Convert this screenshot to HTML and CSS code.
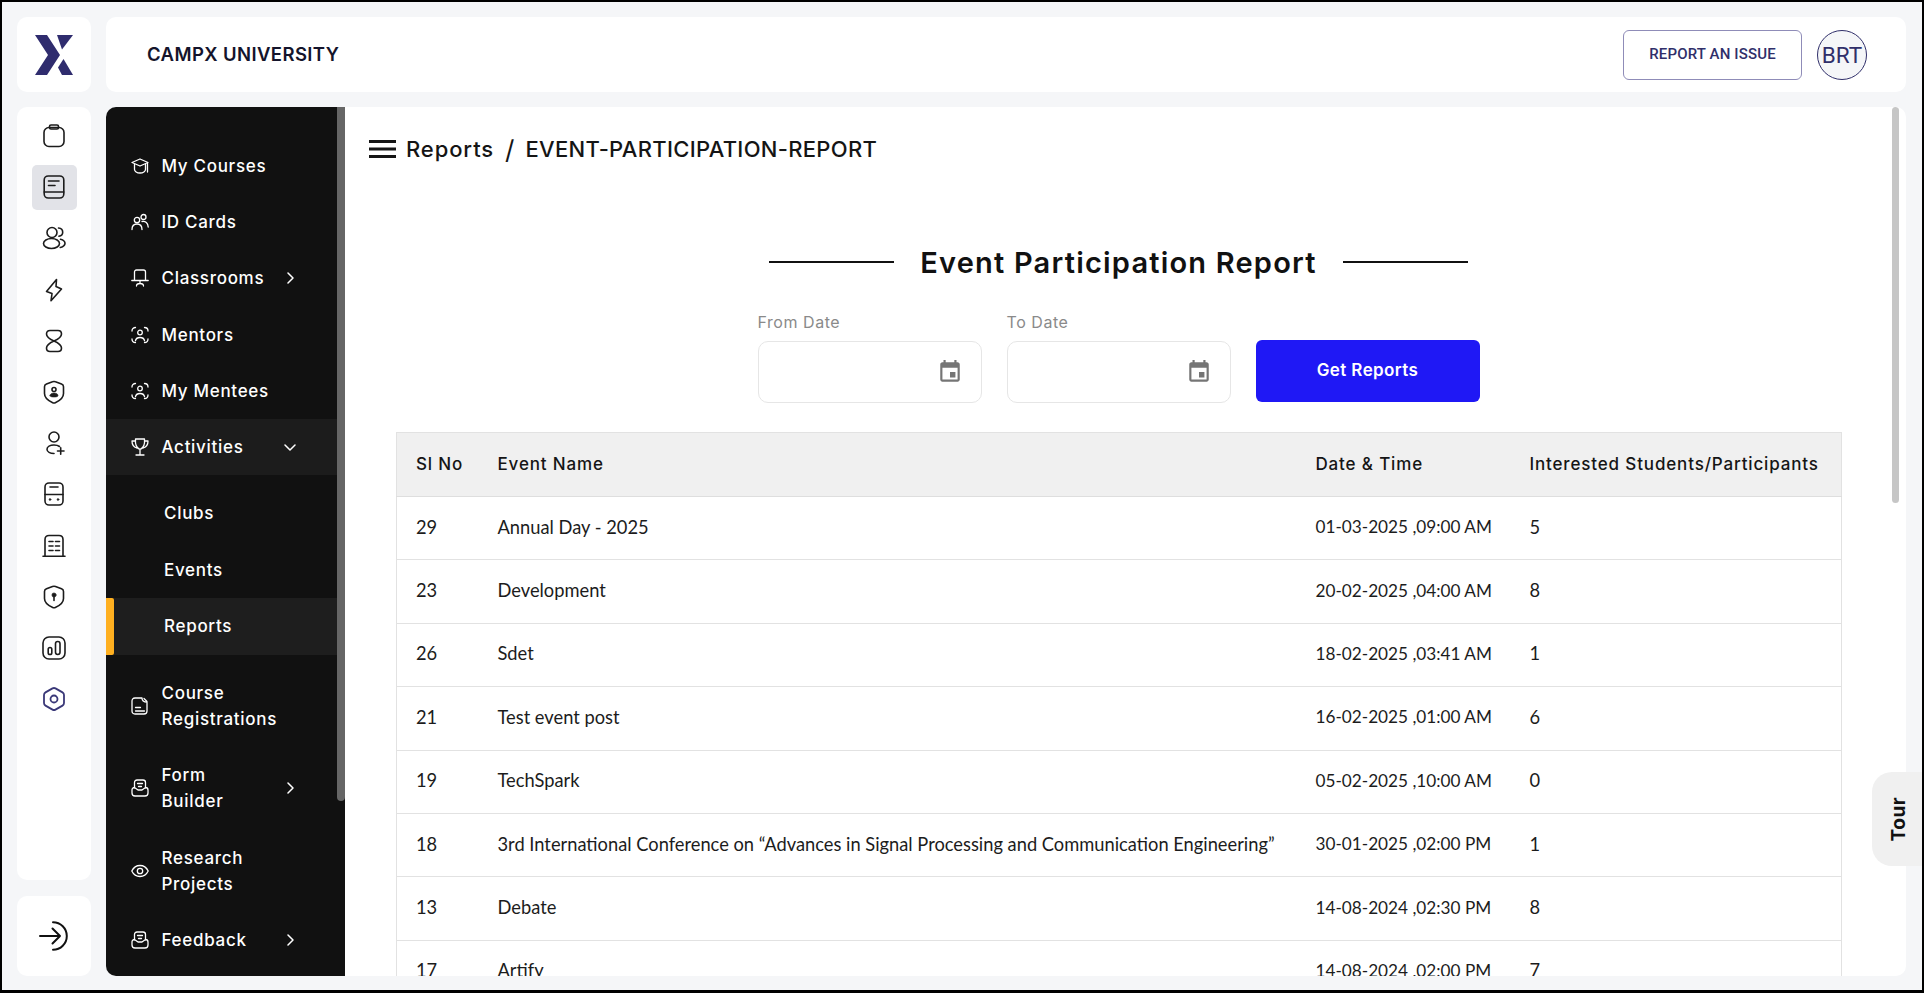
FILE: index.html
```html
<!DOCTYPE html>
<html lang="en">
<head>
<meta charset="utf-8">
<title>Event Participation Report</title>
<link rel="stylesheet" href="styles.css">
</head>
<body>
<div class="frame">
  <div class="card logo-card">
    <svg class="logo" viewBox="0 0 38 40"><polygon points="0,0 12,0 25,20 12,40 0,40 13,20"/><polygon points="22,0 38,0 27,14.500"/><polygon points="28.500,24 38,40 27,40 23,32.500"/></svg>
  </div>
  <header class="card topbar">
    <div class="org">CAMPX UNIVERSITY</div>
    <div class="top-actions">
      <button class="report-btn">REPORT AN ISSUE</button>
      <div class="avatar">BRT</div>
    </div>
  </header>
  <div class="rail-col">
    <nav class="card rail">
      <a class="rail-item"><svg viewBox="0 0 24 24"><rect x="2" y="3.500" width="20" height="19" rx="5"/><rect x="7.500" y="1" width="9" height="4" rx="1.500"/></svg></a>
      <a class="rail-item on"><svg viewBox="0 0 24 24"><rect x="2.200" y="1" width="19.600" height="22" rx="4"/><path d="M2.200 17h19.600M6.500 6h10.500M6.500 10.500h6.500"/></svg></a>
      <a class="rail-item"><svg viewBox="0 0 24 24"><circle cx="10" cy="6.500" r="5"/><ellipse cx="9.500" cy="17.500" rx="8" ry="5"/><path d="M16.500 2c3 .3 4.200 2 4.200 4.200 0 2-1.300 3.600-3.800 4M18.500 13.200c2.800.8 4.500 2.200 4.500 4 0 2-1.800 3.500-4.700 4.300"/></svg></a>
      <a class="rail-item"><svg viewBox="0 0 24 24"><path d="M14.500 1.500 4.500 13.500 10 15.500 9 22.800 19.500 11 14 8.500Z"/></svg></a>
      <a class="rail-item"><svg viewBox="0 0 24 24"><path d="M12 12C7.500 10 4.500 8 4.500 5 4.500 2.500 6 1.500 8 1.500h8c2 0 3.500 1 3.500 3.500 0 3-3 5-7.500 7-4.500 2-7.500 4-7.500 7 0 2.500 1.500 3.500 3.500 3.500h8c2 0 3.500-1 3.500-3.500 0-3-3-5-7.500-7Z"/></svg></a>
      <a class="rail-item"><svg viewBox="0 0 24 24"><path d="M10.500 1.800a4 4 0 0 1 3 0l6 2.200c1.300.5 2 1.500 2 2.800v6.700c0 4-3.200 7-8.200 9.200a3 3 0 0 1-2.600 0C5.700 20.500 2.500 17.500 2.500 13.500V6.800c0-1.300.7-2.300 2-2.800Z"/><circle cx="12" cy="9.500" r="2"/><path class="solid" d="M8 15.700c0-1.800 1.800-2.700 4-2.700s4 .9 4 2.700c0 .9-1.800 1.300-4 1.300s-4-.4-4-1.300Z"/></svg></a>
      <a class="rail-item"><svg viewBox="0 0 24 24"><circle cx="12" cy="6" r="5"/><path d="M17.500 15.500c-1.300-1-3.200-1.500-5.500-1.500-3.800 0-7 1.700-7 4.300s3.200 4.200 7 4.200M15.500 20h6.500M18.700 16.800v6.400"/></svg></a>
      <a class="rail-item"><svg viewBox="0 0 24 24"><rect x="3" y="1" width="18" height="22" rx="4"/><path d="M3 12.500h18M8 5h8"/><circle class="solid" cx="8" cy="17.500" r=".9"/><circle class="solid" cx="16" cy="17.500" r=".9"/></svg></a>
      <a class="rail-item"><svg viewBox="0 0 24 24"><path d="M3 22.300V5.500c0-2.500 1.500-4 4-4h10c2.500 0 4 1.500 4 4v16.800M1 22.300h22M7 7.500h4M13.500 7.500h4M7 12h4M13.500 12h4M7 16.500h4M13.500 16.500h4"/></svg></a>
      <a class="rail-item"><svg viewBox="0 0 24 24"><path d="M10.500 1.500a4 4 0 0 1 3 0l6 2.300c1.300.5 2 1.500 2 2.700v7c0 3.800-3.200 6.800-8.200 9a3 3 0 0 1-2.600 0C5.700 20.300 2.500 17.300 2.500 13.500v-7c0-1.200.7-2.200 2-2.700Z"/><circle class="solid" cx="12" cy="10" r="2.100"/><path d="M12 11v4.500"/></svg></a>
      <a class="rail-item"><svg viewBox="0 0 24 24"><rect x="1" y="1" width="22" height="22" rx="6"/><rect x="6.200" y="11.500" width="3.600" height="7" rx="1.800"/><rect x="13.500" y="5.500" width="4.500" height="13" rx="2.250"/></svg></a>
      <a class="rail-item brand"><svg viewBox="0 0 24 24"><path d="M10.500 1.400a3 3 0 0 1 3 0l7 4a3 3 0 0 1 1.500 2.600v8a3 3 0 0 1-1.500 2.600l-7 4a3 3 0 0 1-3 0l-7-4A3 3 0 0 1 2 16V8a3 3 0 0 1 1.500-2.600Z"/><circle cx="12" cy="12" r="3.500"/></svg></a>
    </nav>
    <div class="card exit">
      <svg viewBox="0 0 30 30"><path d="M1 15h20M13.500 7.500 21 15l-7.500 7.500M14 1.200a13.800 13.800 0 0 1 0 27.600"/></svg>
    </div>
  </div>
  <div class="body-row">
    <aside class="sidebar">
      <ul class="menu">
        <li class="item"><svg viewBox="0 0 18 18"><path d="M9 2 1 5.500 9 9l8-3.500Z"/><path d="M3.500 7.500v5c0 1.800 2.400 3.500 5.500 3.500s5.500-1.700 5.500-3.500v-5M16.500 6v9"/></svg><span>My Courses</span></li>
        <li class="item"><svg viewBox="0 0 18 18"><circle cx="6" cy="7" r="2.700"/><circle cx="12.500" cy="4" r="2.500"/><path d="M1 16.500c0-3.500 2.200-5.500 5-5.500s5 2 5 5.500M11 8.500c3.500-.5 6 1.500 6.200 5.500"/></svg><span>ID Cards</span></li>
        <li class="item"><svg viewBox="0 0 18 18"><path d="M3.500 11.500V3c0-1 .7-2 2-2h7c1.300 0 2 1 2 2v8.500M.8 11.500h16.400M9 11.500v3M5.500 17c0-1.500 1.500-2.500 3.500-2.500s3.500 1 3.500 2.500"/></svg><span>Classrooms</span><svg class="chev" viewBox="0 0 7 12"><path d="M1 1l5 5-5 5"/></svg></li>
        <li class="item"><svg viewBox="0 0 18 18"><path d="M1 5c0-2 1.500-3.500 3.500-3.500M13.500 1.500C15.500 1.500 17 3 17 5M1 13c0 2 1.500 3.500 3.500 3.500M17 13c0 2-1.500 3.500-3.500 3.500M4.500 14.500c.5-2 2.400-3 4.500-3s4 1 4.500 3"/><circle cx="9" cy="6.500" r="2.300"/></svg><span>Mentors</span></li>
        <li class="item"><svg viewBox="0 0 18 18"><path d="M1 5c0-2 1.500-3.500 3.500-3.500M13.500 1.500C15.500 1.500 17 3 17 5M1 13c0 2 1.500 3.500 3.500 3.500M17 13c0 2-1.500 3.500-3.500 3.500M4.500 14.500c.5-2 2.400-3 4.500-3s4 1 4.500 3"/><circle cx="9" cy="6.500" r="2.300"/></svg><span>My Mentees</span></li>
        <li class="item open"><svg viewBox="0 0 18 18"><path d="M4.500 1h9c.5 5.500-.8 9-4.500 10.500C5.300 10 4 6.500 4.500 1ZM4.500 3H1c0 3.500 1.500 6 4.700 7M13.500 3H17c0 3.500-1.500 6-4.700 7M9 11.500v5.500M5 17h8"/></svg><span>Activities</span><svg class="chev down" viewBox="0 0 12 7"><path d="M1 1l5 5 5-5"/></svg></li>
        <li class="sub first">Clubs</li>
        <li class="sub">Events</li>
        <li class="sub active">Reports</li>
        <li class="item tall first-tall"><svg viewBox="0 0 18 18"><path d="M4 1h7c0 2.500 1.500 4 5 4.200V14c0 1.800-1 3-3 3H4c-2 0-3-1.200-3-3V4c0-1.800 1-3 3-3ZM13 1.500l3 3M4.500 10.500h5M4.500 14h9"/></svg><span>Course<br>Registrations</span></li>
        <li class="item tall"><svg viewBox="0 0 18 18"><path d="M3.500 9V3.500C3.500 2 4.500 1 6 1h6c1.500 0 2.500 1 2.500 2.500V9M3.500 8.500C2 8.500 1 9.500 1 11v3c0 1.800 1.200 3 3 3h10c1.800 0 3-1.200 3-3v-3c0-1.500-1-2.500-2.500-2.500L11 11H7ZM6.500 4.500h5M7.500 7.500h3"/></svg><span>Form<br>Builder</span><svg class="chev" viewBox="0 0 7 12"><path d="M1 1l5 5-5 5"/></svg></li>
        <li class="item tall"><svg viewBox="0 0 18 18"><path d="M.8 9C2.500 5.500 5.500 3.500 9 3.500s6.500 2 8.200 5.500c-1.700 3.500-4.700 5.500-8.200 5.500S2.500 12.500.8 9Z"/><circle cx="9" cy="9" r="2.700"/></svg><span>Research<br>Projects</span></li>
        <li class="item"><svg viewBox="0 0 18 18"><path d="M3.500 9V3.500C3.500 2 4.500 1 6 1h6c1.500 0 2.500 1 2.500 2.500V9M3.500 8.500C2 8.500 1 9.500 1 11v3c0 1.800 1.200 3 3 3h10c1.800 0 3-1.200 3-3v-3c0-1.500-1-2.500-2.500-2.500L11 11H7ZM6.500 4.500h5M7.500 7.500h3"/></svg><span>Feedback</span><svg class="chev" viewBox="0 0 7 12"><path d="M1 1l5 5-5 5"/></svg></li>
      </ul>
      <div class="thumb side-thumb"></div>
    </aside>
    <main class="main">
      <div class="crumbs">
        <svg class="burger" viewBox="0 0 27 18"><path d="M0 1.500h27M0 9h27M0 16.500h27"/></svg>
        <span class="crumb-parent">Reports</span><span class="slash">/</span><span class="crumb-page">EVENT-PARTICIPATION-REPORT</span>
      </div>
      <div class="title-row">
        <i class="rule"></i>
        <h1>Event Participation Report</h1>
        <i class="rule"></i>
      </div>
      <form class="filters">
        <div class="field">
          <label>From Date</label>
          <div class="date-box"><svg viewBox="0 0 24 24"><path d="M17 12h-5v5h5v-5zM16 1v2H8V1H6v2H5c-1.110 0-1.990.9-1.990 2L3 19c0 1.100.89 2 2 2h14c1.100 0 2-.9 2-2V5c0-1.100-.9-2-2-2h-1V1h-2zm3 18H5V8h14v11z"/></svg></div>
        </div>
        <div class="field">
          <label>To Date</label>
          <div class="date-box"><svg viewBox="0 0 24 24"><path d="M17 12h-5v5h5v-5zM16 1v2H8V1H6v2H5c-1.110 0-1.990.9-1.990 2L3 19c0 1.100.89 2 2 2h14c1.100 0 2-.9 2-2V5c0-1.100-.9-2-2-2h-1V1h-2zm3 18H5V8h14v11z"/></svg></div>
        </div>
        <button type="button" class="get-btn">Get Reports</button>
      </form>
      <table class="report">
        <thead>
          <tr><th class="c1">Sl No</th><th class="c2">Event Name</th><th class="c3">Date &amp; Time</th><th class="c4">Interested Students/Participants</th></tr>
        </thead>
        <tbody>
          <tr><td>29</td><td>Annual Day - 2025</td><td class="when">01-03-2025 ,09:00 AM</td><td>5</td></tr>
          <tr><td>23</td><td>Development</td><td class="when">20-02-2025 ,04:00 AM</td><td>8</td></tr>
          <tr><td>26</td><td>Sdet</td><td class="when">18-02-2025 ,03:41 AM</td><td>1</td></tr>
          <tr><td>21</td><td>Test event post</td><td class="when">16-02-2025 ,01:00 AM</td><td>6</td></tr>
          <tr><td>19</td><td>TechSpark</td><td class="when">05-02-2025 ,10:00 AM</td><td>0</td></tr>
          <tr><td>18</td><td>3rd International Conference on “Advances in Signal Processing and Communication Engineering”</td><td class="when">30-01-2025 ,02:00 PM</td><td>1</td></tr>
          <tr><td>13</td><td>Debate</td><td class="when">14-08-2024 ,02:30 PM</td><td>8</td></tr>
          <tr><td>17</td><td>Artify</td><td class="when">14-08-2024 ,02:00 PM</td><td>7</td></tr>
        </tbody>
      </table>
      <div class="thumb main-thumb"></div>
    </main>
  </div>
  <div class="tour"><span>Tour</span></div>
</div>
</body>
</html>
```
FILE: styles.css
```css
* { box-sizing: border-box; }
html, body { margin: 0; height: 100%; overflow: hidden; }
body { font-family: "Inter", "Liberation Sans", sans-serif; color: #121212; background: #000; }
.frame {
  position: relative;
  height: 993px;
  border: solid #000;
  border-width: 2px 2px 3px 2px;
  background: #f5f6f8;
  padding: 15px 16px 14px 15px;
  display: grid;
  grid-template-columns: 74px 1fr;
  grid-template-rows: 75px 869px;
  column-gap: 15px;
  row-gap: 15px;
}
.card { background: #fff; border-radius: 10px; }
.logo-card { display: flex; align-items: center; justify-content: center; }
.logo { width: 38px; height: 40px; fill: #2f2c6e; }
.topbar { display: flex; align-items: center; justify-content: space-between; padding: 0 39px 0 41px; }
.org { font-size: 18.500px; font-weight: 600; color: #14142b; letter-spacing: .4px; transform: translateY(-1px); }
.top-actions { display: flex; align-items: center; gap: 15px; }
.report-btn {
  width: 179px; height: 50px; background: #fff;
  border: 1px solid #8f8cb8; border-radius: 6px;
  font: 500 15px "Roboto", sans-serif; color: #302f6a; letter-spacing: .15px; padding: 0 0 2px;
}
.avatar {
  width: 50px; height: 50px; border-radius: 50%;
  border: 1px solid #302f6a; background: #f5f6f8;
  display: flex; align-items: center; justify-content: center;
  font: 400 22.500px "Roboto", sans-serif; color: #302f6a;
}
.rail-col { display: flex; flex-direction: column; gap: 16px; min-height: 0; }
.rail { flex: 1; display: flex; flex-direction: column; align-items: center; padding-top: 6.500px; gap: 6.200px; }
.rail-item { width: 45px; height: 45px; display: flex; align-items: center; justify-content: center; border-radius: 5px; }
.rail-item.on { background: #e2e3e8; }
.rail-item svg { width: 24px; height: 24px; fill: none; stroke: #1c1c1c; stroke-width: 1.600; stroke-linecap: round; stroke-linejoin: round; }
.rail-item svg .solid { fill: #1c1c1c; stroke-width: .6; }
.rail-item.brand svg { stroke: #3a3878; stroke-width: 1.800; }
.exit { height: 80px; display: flex; align-items: center; justify-content: center; }
.exit svg { width: 30px; height: 30px; fill: none; stroke: #111; stroke-width: 2; stroke-linecap: round; stroke-linejoin: round; }
.body-row { display: flex; min-width: 0; min-height: 0; }
.sidebar {
  position: relative; width: 239px; flex: none; overflow: hidden;
  background: #111; border-radius: 10px 0 0 10px; padding-right: 8px;
}
.menu { list-style: none; margin: 0; padding: 31px 0 0; color: #fff; font-size: 17px; font-weight: 500; letter-spacing: .7px; }
.item { display: flex; align-items: center; height: 56.200px; padding: 0 43px 0 25px; line-height: 26px; }
.item > svg:first-child { width: 18px; height: 18px; flex: none; margin-right: 12.500px; fill: none; stroke: #fff; stroke-width: 1.300; stroke-linecap: round; stroke-linejoin: round; }
.item.tall { height: 82.500px; }
.item.open { background: #1c1c1c; }
.first-tall { margin-top: 10px; }
.chev { width: 7px; height: 12px; margin-left: auto; fill: none; stroke: #fff; stroke-width: 1.500; stroke-linecap: round; stroke-linejoin: round; }
.chev.down { width: 12px; height: 7px; margin-right: -2px; }
.sub { position: relative; height: 56.500px; display: flex; align-items: center; padding-left: 58px; }
.sub.first { margin-top: 10px; }
.sub.active { background: #1e1e1e; }
.sub.active::before { content: ""; position: absolute; left: 0; top: 0; bottom: 0; width: 8px; background: #ffb020; border-radius: 0 2px 2px 0; }
.thumb { position: absolute; top: 0; border-radius: 0 0 4px 4px; }
.side-thumb { right: 0; width: 8px; height: 694px; background: #666; }
.main { position: relative; flex: 1; min-width: 0; overflow: hidden; background: #fff; border-radius: 0 10px 10px 0; padding-right: 14px; }
.main-thumb { right: 7px; width: 7px; height: 396px; background: #c6c6c6; border-radius: 4px; }
.crumbs { display: flex; align-items: center; height: 30px; margin: 27px 0 0 24px; font-size: 22px; font-weight: 500; color: #151515; }
.crumb-parent { letter-spacing: .9px; }
.crumb-page { letter-spacing: .3px; }
.burger { width: 27px; height: 18px; margin-right: 10px; fill: none; stroke: #151515; stroke-width: 2.800; }
.slash { margin: 0 11px; font-size: 26px; font-weight: 400; }
.title-row { display: flex; justify-content: center; align-items: center; gap: 26px; height: 42px; margin-top: 77px; }
.title-row h1 { margin: 0; font-size: 29px; font-weight: 600; color: #111; letter-spacing: 1.200px; }
.rule { width: 125px; height: 2px; background: #111; }
.filters { display: flex; justify-content: center; gap: 25px; margin-top: 27px; align-items: flex-end; }
.field { width: 224px; }
.field label { display: block; height: 31px; line-height: 24px; font-size: 16px; color: #8a8a8a; letter-spacing: .55px; }
.date-box { height: 62px; border: 1px solid #e6e6e6; border-radius: 10px; display: flex; align-items: center; justify-content: flex-end; padding-right: 18px; }
.date-box svg { width: 26px; height: 26px; fill: #757575; }
.get-btn { width: 224px; height: 62px; margin-bottom: 1px; border: 0; border-radius: 6px; background: #1f18f5; color: #fff; font: 600 17px "Inter", sans-serif; letter-spacing: .4px; padding: 0 0 2px; }
.report { width: 1445px; margin: 29px 51px 0; border-collapse: collapse; table-layout: fixed; border: 1px solid #e2e2e2; }
.report th { height: 64px; background: #f0f0f0; border-bottom: 1px solid #dedede; padding: 0 0 2px 19px; text-align: left; font-size: 17px; font-weight: 500; color: #151515; letter-spacing: .85px; }
.report td { height: 63.400px; border-bottom: 1px solid #e2e2e2; padding: 0 0 3px 19px; font-family: "Lato", sans-serif; font-size: 18.300px; color: #1c1c1c; white-space: nowrap; }
.report td.when { font-size: 17.200px; }
.c1 { width: 82px; }
.c2 { width: 818px; }
.c3 { width: 214px; }
.c4 { width: 331px; }
.tour {
  position: absolute; right: 0; top: 770px; width: 50px; height: 94px;
  background: #f0f0f0; border-radius: 20px 0 0 20px;
  display: flex; align-items: center; justify-content: center;
}
.tour span { writing-mode: vertical-rl; transform: rotate(180deg); font-size: 19px; font-weight: 700; color: #111; letter-spacing: .5px; padding-right: 2px; }
```
